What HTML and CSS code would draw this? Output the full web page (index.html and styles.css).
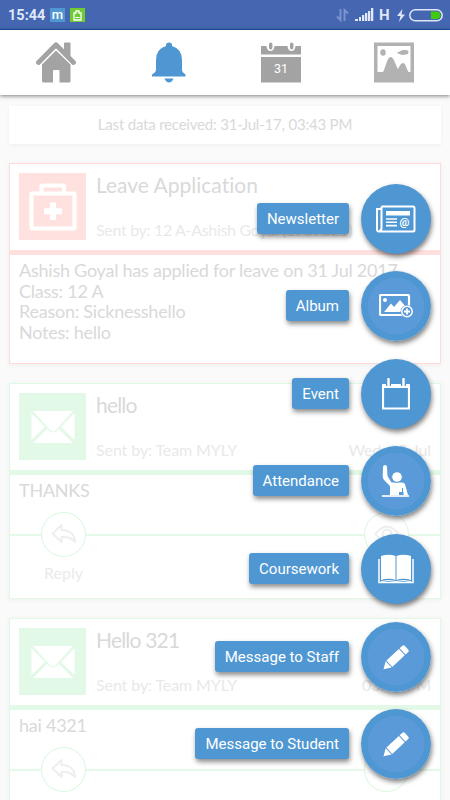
FILE: index.html
```html
<!DOCTYPE html>
<html lang="en">
<head>
    <meta charset="UTF-8">
    <meta name="viewport" content="width=device-width, initial-scale=1.0">
    <title>Notifications</title>
    <link rel="stylesheet" href="styles.css">
</head>
<body>

<svg class="defs" width="0" height="0">
    <symbol id="envelope" viewBox="0 0 44 34">
        <path d="M2 1H42L25 20Q22 23 19 20Z" fill="#fff"/>
        <path d="M.5 3L14 17L.5 30ZM43.500 3L30 17L43.500 30ZM2 33L16 19Q22 26 28 19L42 33Z" fill="#fff"/>
    </symbol>
    <symbol id="reply" viewBox="0 0 26 22">
        <path d="M10.500 2L1.500 10.500L10.500 19V14C17 13.500 21 15 24 19C24 11 18 7 10.500 7Z" fill="none" stroke="#eee" stroke-width="2" stroke-linejoin="round"/>
    </symbol>
    <symbol id="eye" viewBox="0 0 26 20">
        <path d="M1.500 10Q13-5 24.500 10Q13 25 1.500 10Z" fill="none" stroke="#eee" stroke-width="2"/>
        <circle cx="13" cy="10" r="4.500" fill="none" stroke="#eee" stroke-width="2"/>
    </symbol>
    <symbol id="pencil" viewBox="0 0 26 26">
        <g fill="#fff" transform="translate(.5 25.200) rotate(-43)">
            <path d="M0 0L7-4.300V4.300Z"/>
            <path d="M8-4.300H25V4.300H8Z"/>
            <path d="M26-4.300H29.500Q31.500-4.300 31.500-2.300V2.300Q31.500 4.300 29.500 4.300H26Z"/>
        </g>
    </symbol>
</svg>

<div class="status-bar">
    <span class="time">15:44</span>
    <span class="app-badge">m</span>
    <span class="app-badge green">
        <svg width="9" height="11" viewBox="0 0 9 11"><path d="M1 3H3V1H6V3H8V10H1Z" fill="none" stroke="#fff" stroke-width="1.300"/><path d="M2.500 7.500H6.500" stroke="#fff"/></svg>
    </span>
    <div class="status-icons">
        <svg class="data" width="13" height="14" viewBox="0 0 13 14"><path d="M4.500 1V12L1 8.500M8.500 13V2L12 5.500" fill="none" stroke="#7d95cd" stroke-width="1.900"/></svg>
        <svg class="signal" width="19" height="14" viewBox="0 0 19 14"><path d="M0 11h3v2H0zM4 9h2v4H4zM7 7h2.300v6H7zM10 5h2.300v8H10zM13 3h2.300v10H13zM16 0h2.300v13H16z" fill="#dfe7f8"/></svg>
        <span class="network">H</span>
        <svg class="bolt" width="8" height="13" viewBox="0 0 8 13"><path d="M5.500 0L0 7H3.500L2 13L8 5.500H4.500Z" fill="#dfe7f8"/></svg>
        <svg width="34" height="13" viewBox="0 0 34 13"><rect x=".8" y=".8" width="32.400" height="11" rx="5.500" fill="none" stroke="#dfe7f8" stroke-width="1.500"/><path d="M22 2.500H28Q31.500 3 31.500 6.300Q31.500 9.600 28 10H22Z" fill="#43c90b"/></svg>
    </div>
</div>

<div class="nav">
    <div class="nav-item">
        <svg width="40" height="41" viewBox="0 0 40 41"><path d="M28 1Q28 .5 29 .5H33.500Q34.500.500 34.500 1.500V15L28 9Z" fill="#a3a3a3"/><path d="M20 2.700L2.500 20.500M20 2.700L37.500 20.500" stroke="#a3a3a3" stroke-width="4.800" stroke-linecap="round"/><path d="M6 22.500L20 8.500L34.500 22.500V39Q34.500 40.500 33 40.500H23.500V29Q23.500 28 22.500 28H18Q17 28 17 29V40.500H7.500Q6 40.500 6 39Z" fill="#a3a3a3"/></svg>
    </div>
    <div class="nav-item">
        <svg width="36" height="41" viewBox="0 0 36 41"><path d="M15 4V3Q15 .5 18 .5Q21 .5 21 3V4Q31 7 31 18V28Q31 30 34.500 32.500V34.500H1V32.500Q5 30 5 28V18Q5 7 15 4ZM13.500 36.500H22.500Q21 40.500 18 40.500Q15 40.500 13.500 36.500Z" fill="#4f97d2"/></svg>
    </div>
    <div class="nav-item">
        <svg width="40" height="41" viewBox="0 0 40 41"><path d="M0 4H5.500Q6 9 9.500 9Q13 9 13.500 4H26.500Q27 9 30.500 9Q34 9 34.500 4H40V12.500H0ZM0 15H40V40.500H0Z" fill="#a3a3a3"/><rect x="8" y=".5" width="3.400" height="7" rx="1.700" fill="#a3a3a3"/><rect x="29" y=".5" width="3.400" height="7" rx="1.700" fill="#a3a3a3"/><text x="20" y="31" class="cal-day">31</text></svg>
    </div>
    <div class="nav-item">
        <svg width="40" height="41" viewBox="0 0 40 41"><rect y=".5" width="40" height="40" fill="#b2b2b2"/><rect x="3.500" y="4" width="33" height="26" fill="#fff"/><path d="M9 30C12 25 13 15 16.500 15C20 15 21 22 24 27C26 23 27 21 29 21C32 21 32 27 35 30.500H9Z" fill="#b2b2b2"/><ellipse cx="9" cy="10.500" rx="2.700" ry="3.200" fill="#b2b2b2"/><path d="M23 10.500Q25 9.500 26 9.500Q27 7.500 31 8Q34.500 7.500 34.500 10.500Q34.500 13 31 12.500Q27 13.500 26 12Q24 12 23 10.500Z" fill="#b2b2b2"/></svg>
    </div>
</div>

<div class="content">
    <div class="last-data">Last data received: 31-Jul-17, 03:43 PM</div>

    <div class="card leave">
        <div class="card-header">
            <div class="card-icon">
                <svg width="48" height="48" viewBox="0 0 48 48"><rect x="2.500" y="10.500" width="43" height="35" rx="1" fill="none" stroke="#fff" stroke-width="4.200"/><path d="M12.500 10V3.500Q12.500 2.500 13.500 2.500H34Q35 2.500 35 3.500V10" fill="none" stroke="#fff" stroke-width="4.200"/><path d="M24 19.500V37M15 28.300H33" stroke="#fff" stroke-width="6"/></svg>
            </div>
            <div class="card-title">
                <h2>Leave Application</h2>
                <div class="meta"><span>Sent by: 12 A-Ashish Goyal (1707321)</span></div>
            </div>
        </div>
        <div class="card-body">Ashish Goyal has applied for leave on 31 Jul 2017<br>Class: 12 A<br>Reason: Sicknesshello<br>Notes: hello</div>
    </div>

    <div class="card message">
        <div class="card-header">
            <div class="card-icon"><svg width="44" height="34"><use href="#envelope"/></svg></div>
            <div class="card-title">
                <h2>hello</h2>
                <div class="meta"><span>Sent by: Team MYLY</span><span>Wed, 12-Jul</span></div>
            </div>
        </div>
        <div class="card-body">THANKS</div>
        <div class="actions">
            <div class="action"><div class="circle"><svg width="26" height="22"><use href="#reply"/></svg></div>Reply</div>
            <div class="action"><div class="circle"><svg width="26" height="20"><use href="#eye"/></svg></div></div>
        </div>
    </div>

    <div class="card message">
        <div class="card-header">
            <div class="card-icon"><svg width="44" height="34"><use href="#envelope"/></svg></div>
            <div class="card-title">
                <h2>Hello 321</h2>
                <div class="meta"><span>Sent by: Team MYLY</span><span>03:43 PM</span></div>
            </div>
        </div>
        <div class="card-body">hai 4321</div>
        <div class="actions">
            <div class="action"><div class="circle"><svg width="26" height="22"><use href="#reply"/></svg></div></div>
            <div class="action"><div class="circle"></div></div>
        </div>
    </div>
</div>

<div class="fab-menu">
    <div class="fab-row">
        <span class="fab-label">Newsletter</span>
        <button class="fab">
            <svg width="40" height="28" viewBox="0 0 40 28"><path d="M5.500 1.500H37Q38.500 1.500 38.500 3V25Q38.500 26.500 37 26.500H3Q1 26.500 1 24V4H5.500M5.500 1.500V23Q5.500 26 3 26" fill="none" stroke="#fff" stroke-width="2"/><path d="M10 6H34V10.500H10Z" fill="#fff"/><path d="M10 14H21M10 17.300H21M10 20.600H21" stroke="#fff" stroke-width="1.600"/><text x="28.500" y="21" class="at">@</text></svg>
        </button>
    </div>
    <div class="fab-row">
        <span class="fab-label">Album</span>
        <button class="fab light">
            <svg width="34" height="24" viewBox="0 0 34 24"><rect x="1" y="1" width="29" height="20" rx="1" fill="none" stroke="#fff" stroke-width="2.200"/><circle cx="6" cy="6" r="2" fill="#fff"/><path d="M5 18L12 9.500L15 13L21 6L27 13V18Z" fill="#fff"/><circle cx="28" cy="17.500" r="6.500" fill="#5a9ad8"/><circle cx="28" cy="17.500" r="5.200" fill="#5a9ad8" stroke="#fff" stroke-width="1.500"/><path d="M28 14.500V20.500M25 17.500H31" stroke="#fff" stroke-width="1.800"/></svg>
        </button>
    </div>
    <div class="fab-row">
        <span class="fab-label">Event</span>
        <button class="fab">
            <svg width="28" height="32" viewBox="0 0 28 32"><path d="M1 7H27V30.500H1Z" fill="none" stroke="#fff" stroke-width="2.200" stroke-linejoin="round"/><path d="M1 6H27V10H1Z" fill="#fff"/><path d="M6.500 0V8M21.500 0V8" stroke="#4f97d2" stroke-width="5"/><path d="M6.500 1V7.500M21.500 1V7.500" stroke="#fff" stroke-width="2.400" stroke-linecap="round"/></svg>
        </button>
    </div>
    <div class="fab-row">
        <span class="fab-label">Attendance</span>
        <button class="fab light">
            <svg width="28" height="32" viewBox="0 0 28 32"><path d="M0 30H27V32H0Z" fill="#e3eefa"/><path d="M1 2Q1 0 3 0Q5 0 5 2L5.500 11L9.500 17.500H20Q23 17.500 23.500 21L26 30H21.500V27H17V30H8V21L2 15Q.5 13 .7 10Z" fill="#fff"/><path d="M20.500 23V28" stroke="#5a9ad8"/><circle cx="15" cy="12" r="5.300" fill="#fff" stroke="#5a9ad8"/></svg>
        </button>
    </div>
    <div class="fab-row">
        <span class="fab-label">Coursework</span>
        <button class="fab">
            <svg width="36" height="30" viewBox="0 0 36 30"><path d="M1 5V28.500H35V5" fill="none" stroke="#fff" stroke-width="1.500"/><path d="M3 2Q11-.5 17.500 2V26Q11 23.500 3 26ZM18.500 2Q25-.5 33 2V26Q25 23.500 18.500 26Z" fill="#fff"/><path d="M3 27.500Q11 25.500 18 27.500Q25 25.500 33 27.500" fill="none" stroke="#fff"/></svg>
        </button>
    </div>
    <div class="fab-row">
        <span class="fab-label">Message to Staff</span>
        <button class="fab light"><svg width="26" height="26"><use href="#pencil"/></svg></button>
    </div>
    <div class="fab-row">
        <span class="fab-label">Message to Student</span>
        <button class="fab light"><svg width="26" height="26"><use href="#pencil"/></svg></button>
    </div>
</div>

</body>
</html>
```
FILE: styles.css
```css
* {
    box-sizing: border-box;
}
body {
    margin: 0;
    height: 800px;
    overflow: hidden;
    position: relative;
    background: #fafafa;
    font-family: 'Lato', sans-serif;
    font-variant-ligatures: none;
    color: #d9d9d9;
}
svg {
    display: block;
    flex: none;
}
.defs {
    position: absolute;
}
.status-bar {
    display: flex;
    align-items: center;
    height: 30px;
    padding: 1px 7px 0 8px;
    background: #4566b0;
    border-bottom: 1px solid #1650a8;
    font-family: 'Roboto', sans-serif;
    color: #dfe7f8;
}
.time {
    width: 42px;
    font-size: 14.5px;
    font-weight: 700;
}
.app-badge {
    display: flex;
    justify-content: center;
    align-items: center;
    width: 15px;
    height: 14px;
    margin-right: 5px;
    background: #4f97d2;
    color: #fff;
    font-size: 13px;
    font-weight: 500;
    line-height: 12px;
}
.app-badge.green {
    background: #6fca33;
}
.status-icons {
    display: flex;
    align-items: center;
    margin-left: auto;
}
.data {
    margin-right: -1px;
}
.signal {
    margin: 0 5px 0 7px;
}
.network {
    width: 18px;
    font-size: 15px;
    font-weight: 700;
}
.bolt {
    margin-right: 4px;
}
.nav {
    display: flex;
    position: relative;
    height: 65px;
    background: #fff;
    box-shadow: 0 1px 4px rgba(0, 0, 0, 0.5);
}
.nav-item {
    flex: 1;
    display: flex;
    justify-content: center;
    padding-top: 12px;
}
.cal-day {
    font-family: 'Roboto', sans-serif;
    font-size: 12.5px;
    text-anchor: middle;
    fill: #fff;
}
.content {
    display: flex;
    flex-direction: column;
    gap: 19px;
    padding: 11px 9px 0;
}
.last-data {
    height: 38px;
    line-height: 37px;
    background: #fff;
    box-shadow: 0 1px 4px rgba(0, 0, 0, 0.05);
    font-size: 15px;
    letter-spacing: -0.2px;
    text-align: center;
}
.card {
    height: 216px;
    flex: none;
    border: 1px solid #e0f9e4;
    background: #fff;
    box-shadow: 0 1px 5px rgba(0, 0, 0, 0.05);
}
.card.leave {
    height: 201px;
    border-color: #ffdcda;
}
.card-header {
    display: flex;
    height: 91px;
    padding: 9px 9px 0;
    border-bottom: 5px solid #e3f9e7;
}
.leave .card-header {
    border-color: #ffe0de;
}
.card-icon {
    display: flex;
    justify-content: center;
    align-items: center;
    width: 67px;
    height: 67px;
    background: #e3f9e7;
}
.leave .card-icon {
    background: #ffe2df;
}
.card-title {
    flex: 1;
    display: flex;
    flex-direction: column;
    justify-content: space-between;
    height: 67px;
    padding-left: 10px;
}
.card-title h2 {
    margin: 0;
    font-size: 21px;
    font-weight: 400;
    line-height: 23px;
}
.message h2 {
    letter-spacing: -0.8px;
}
.meta {
    display: flex;
    justify-content: space-between;
    color: #e9e9e9;
    font-size: 16px;
    letter-spacing: -0.1px;
    line-height: 20px;
}
.leave .meta {
    letter-spacing: -0.32px;
}
.card-body {
    padding: 5px 9px 1px;
    font-size: 18px;
    letter-spacing: -0.24px;
    line-height: 20.6px;
    white-space: nowrap;
}
.actions {
    display: flex;
    justify-content: space-between;
    margin-top: 10px;
    padding: 0 31px;
    background: linear-gradient(#e5f9e8, #e5f9e8) 0 22px / 100% 2px no-repeat;
}
.action {
    display: flex;
    flex-direction: column;
    align-items: center;
    width: 45px;
    color: #ebebeb;
    font-size: 16px;
    line-height: 19px;
}
.circle {
    display: flex;
    justify-content: center;
    align-items: center;
    width: 45px;
    height: 45px;
    margin-bottom: 6px;
    border: 1px solid #d8f8de;
    border-radius: 50%;
    background: #fff;
}
.fab-menu {
    position: absolute;
    top: 183.6px;
    right: 19px;
    display: flex;
    flex-direction: column;
    gap: 17.6px;
}
.fab-row {
    display: flex;
    justify-content: flex-end;
    align-items: center;
    gap: 12px;
}
.fab-label {
    height: 31px;
    margin-bottom: 1px;
    padding: 0 10px;
    border-radius: 3px;
    background: #4f97d2;
    box-shadow: 1px 3px 5px rgba(0, 0, 0, 0.45);
    color: #fff;
    font-family: 'Roboto', sans-serif;
    font-size: 15px;
    line-height: 33px;
}
.fab {
    display: flex;
    justify-content: center;
    align-items: center;
    width: 70px;
    height: 70px;
    padding: 0;
    border: none;
    border-radius: 50%;
    background: #4f97d2;
    box-shadow: 1px 3px 5px rgba(0, 0, 0, 0.5);
}
.fab.light {
    background: radial-gradient(circle, #5a9ad8 28px, #4f97d2 28.5px);
}
.at {
    font-family: 'Roboto', sans-serif;
    font-size: 11px;
    font-weight: 700;
    text-anchor: middle;
    fill: #fff;
}
```
